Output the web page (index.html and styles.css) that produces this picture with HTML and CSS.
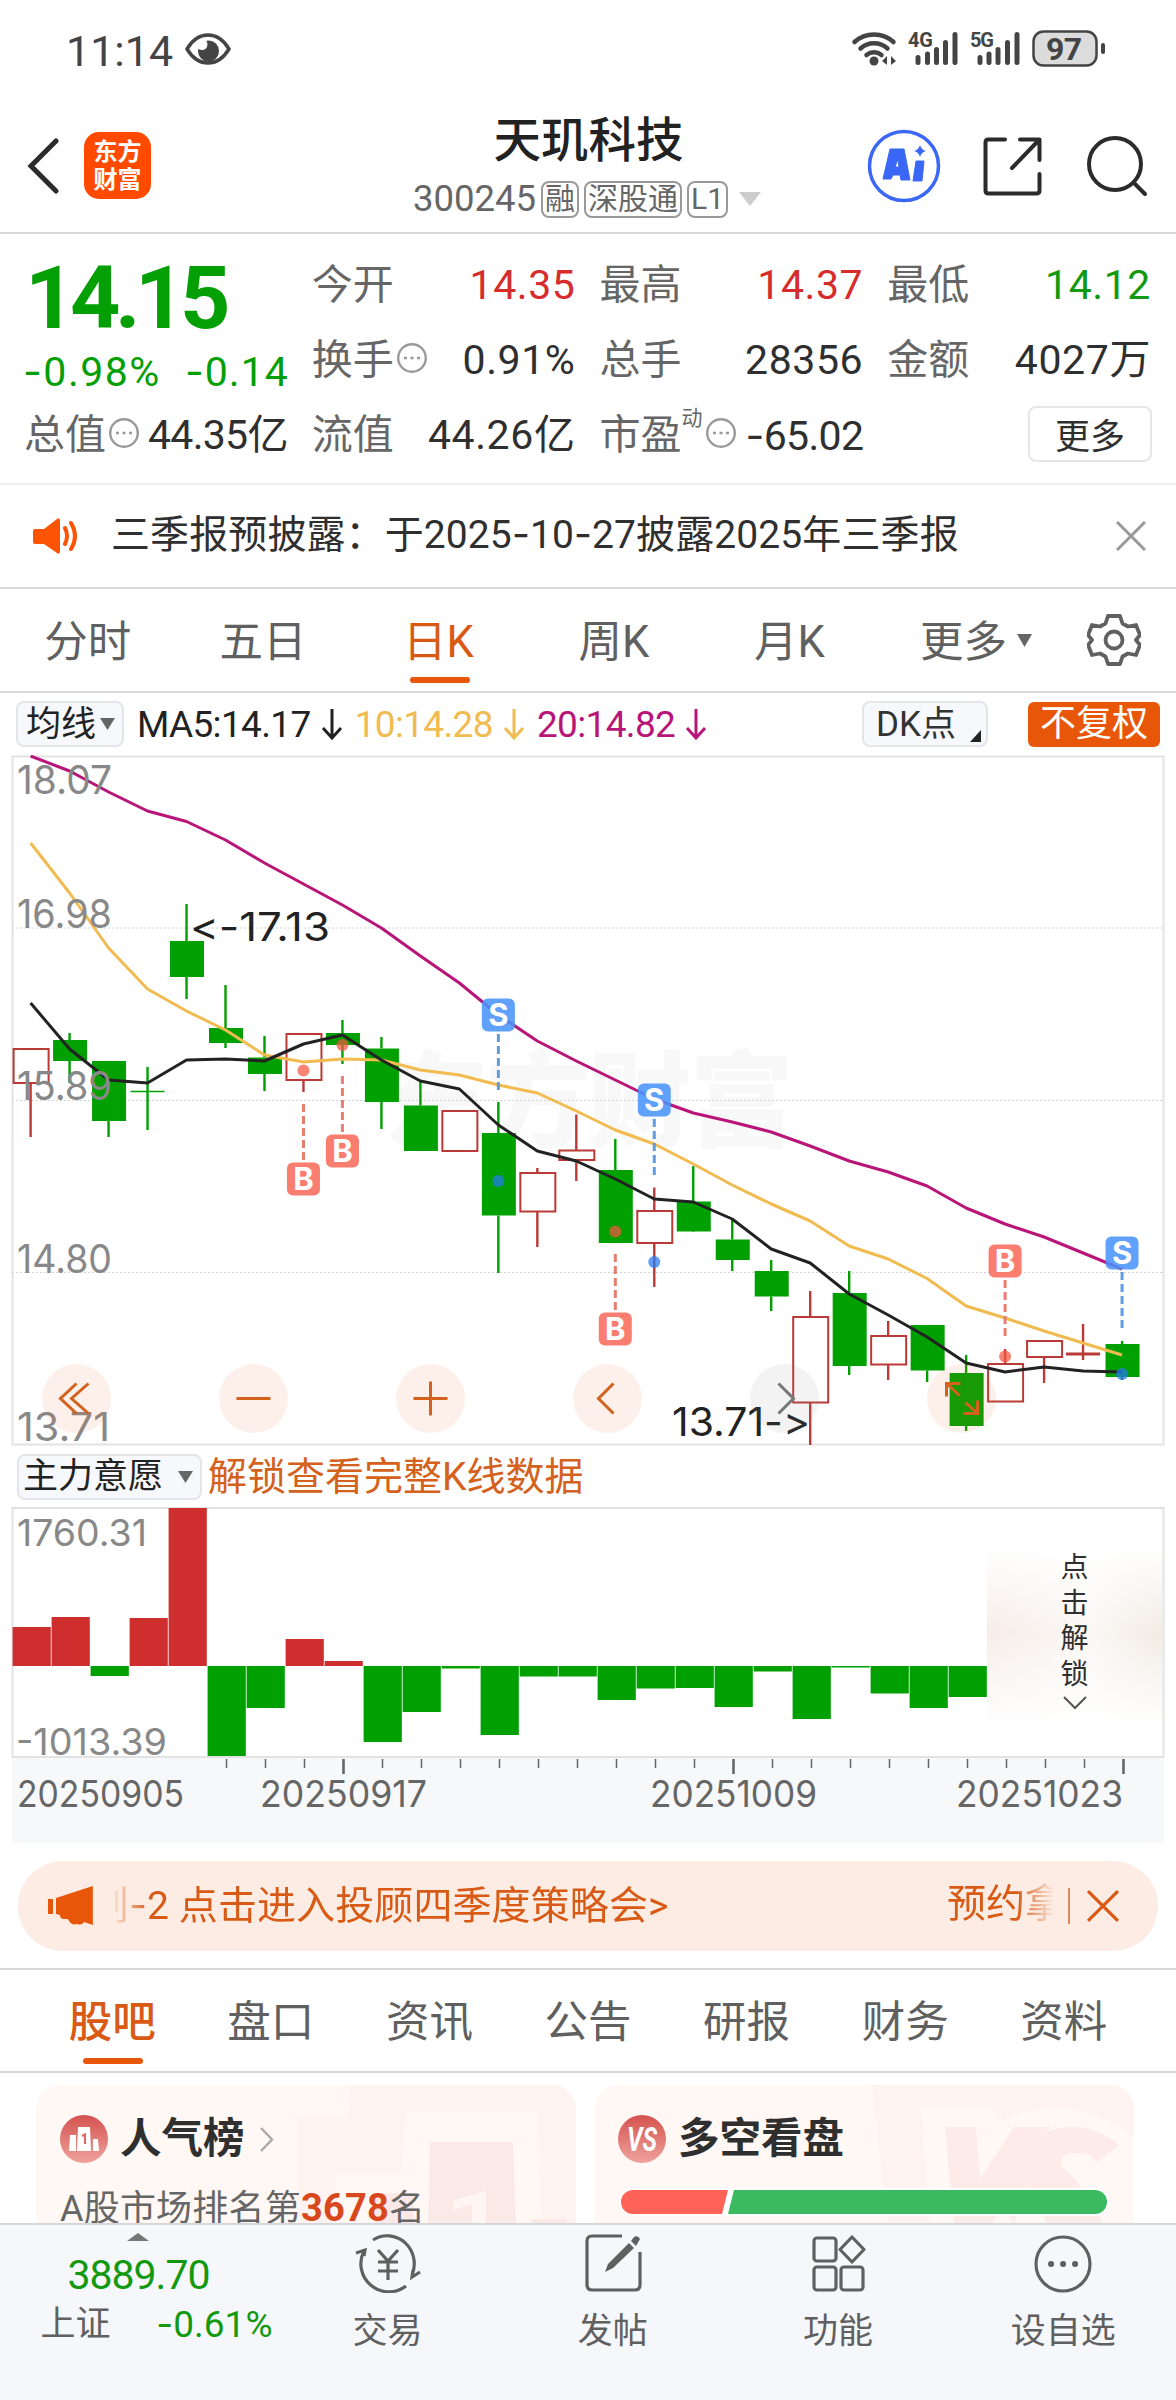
FILE: index.html
```html
<!DOCTYPE html>
<html lang="zh-CN">
<head>
    <meta charset="utf-8">
    <title>天玑科技 300245</title>
    <link rel="stylesheet" href="styles.css">
</head>
<body>
    <div class="status">
        <span class="clock">11:14</span>
        <svg class="eye" width="46" height="32" viewBox="0 0 46 32">
            <circle cx="23.500" cy="18" r="10.500" fill="#444"/>
            <circle cx="17" cy="11.500" r="5.500" fill="#fff"/>
            <path d="M2 16C8 6 15 2 23 2s15 4 21 14c-6 10-13 14-21 14S8 26 2 16z" fill="none" stroke="#444" stroke-width="3.500"/>
        </svg>
        <svg class="signals" width="256" height="40" viewBox="850 30 256 40">
            <g fill="none" stroke="#444" stroke-width="4.500" stroke-linecap="round">
                <path d="M854.500 43a29 29 0 0 1 39 0"/>
                <path d="M860.500 49.500a20 20 0 0 1 27 0"/>
                <path d="M866.500 56a12 12 0 0 1 15 0"/>
            </g>
            <circle cx="874" cy="62" r="4.500" fill="#444"/>
            <path d="M882 62l5-5v9zM896 62l-5-5v9z" fill="#444"/>
            <g stroke="#444" stroke-width="5" stroke-linecap="round">
                <path d="M918 58.500v5M927.500 55v8.500M936.500 50.500v13M945.500 43.500v20M955 35.500v28"/>
                <path d="M980 58.500v5M989 55v8.500M998 50.500v13M1007.500 43.500v20M1017 35.500v28"/>
            </g>
            <text x="908" y="48" class="net" textLength="25">4G</text>
            <text x="970" y="48" class="net" textLength="24">5G</text>
            <rect x="1033.500" y="32.500" width="63" height="34" rx="10" fill="#dcdcdc" stroke="#444" stroke-width="2.500"/>
            <rect x="1101" y="44" width="4" height="11" rx="2" fill="#444"/>
            <text x="1046" y="61" class="battery" textLength="36">97</text>
        </svg>
    </div>

    <div class="header">
        <svg class="back" width="32" height="56" viewBox="0 0 32 56"><path d="M29 3L4 28l25 25" fill="none" stroke="#2b2b2b" stroke-width="5" stroke-linecap="round"/></svg>
        <div class="logo">东方<br>财富</div>
        <div class="title">
            <h1>天玑科技</h1>
            <div class="code">
                <span class="num">300245</span>
                <i>融</i><i>深股通</i><i>L1</i>
                <svg width="22" height="14" viewBox="0 0 22 14"><path d="M0 0h22L11 14z" fill="#ccc"/></svg>
            </div>
        </div>
        <svg class="ai" width="74" height="74" viewBox="0 0 74 74">
            <circle cx="37" cy="37" r="34.500" fill="none" stroke="#3a67f5" stroke-width="3.500"/>
            <path d="M23 20h14l6 31h-9l-1-5h-7l-2 4h-8zM28 38h4l-1-8z" fill="#3a67f5" fill-rule="evenodd" stroke="#3a67f5" stroke-linejoin="round"/>
            <path d="M49 32h8l-2 20h-9z" fill="#3a67f5" stroke="#3a67f5" stroke-linejoin="round"/>
            <path d="M53 16q1.500 5 6 6-4.500 1-6 6-1.500-5-6-6 4.500-1 6-6z" fill="#3a67f5"/>
        </svg>
        <svg class="share" width="60" height="60" viewBox="0 0 60 60">
            <path d="M23 3.500H6.500q-3 0-3 3v48q0 3 3 3h48q3 0 3-3V38M38 3.500h19.500V24M56 5L30 32" fill="none" stroke="#2b2b2b" stroke-width="4" stroke-linecap="round" stroke-linejoin="round"/>
        </svg>
        <svg class="search" width="62" height="62" viewBox="0 0 62 62">
            <circle cx="29" cy="29" r="26" fill="none" stroke="#2b2b2b" stroke-width="4"/>
            <path d="M48 48l11 11" stroke="#2b2b2b" stroke-width="4" stroke-linecap="round"/>
        </svg>
    </div>

    <div class="quote">
        <div class="price">
            <b>14.15</b>
            <p><span><u>-</u>0.98%</span><span><u>-</u>0.14</span></p>
        </div>
        <div class="cell"><label>今开</label><span class="up">14.35</span></div>
        <div class="cell"><label>最高</label><span class="up">14.37</span></div>
        <div class="cell"><label>最低</label><span class="down">14.12</span></div>
        <div class="cell"><label>换手</label><svg class="info" viewBox="0 0 32 32"><circle cx="16" cy="16" r="13.800"/><path d="M8 16h3M14.500 16h3M21 16h3"/></svg><span>0.91%</span></div>
        <div class="cell"><label>总手</label><span>28356</span></div>
        <div class="cell"><label>金额</label><span>4027万</span></div>
        <div class="cell tight"><label>总值</label><svg class="info" viewBox="0 0 32 32"><circle cx="16" cy="16" r="13.800"/><path d="M8 16h3M14.500 16h3M21 16h3"/></svg><span>44.35亿</span></div>
        <div class="cell"><label>流值</label><span>44.26亿</span></div>
        <div class="cell tight"><label>市盈<sup>动</sup></label><svg class="info" viewBox="0 0 32 32"><circle cx="16" cy="16" r="13.800"/><path d="M8 16h3M14.500 16h3M21 16h3"/></svg><span><u>-</u>65.02</span></div>
        <div class="cell"><button class="more">更多</button></div>
    </div>

    <div class="notice">
        <svg width="46" height="38" viewBox="0 0 46 38">
            <path d="M2 12h9L24 2q3-2 3 2v30q0 4-3 2L11 27H2q-2 0-2-2V14q0-2 2-2z" fill="#fc5305"/>
            <path d="M32 11q4 8 0 16M38 6q8 13 0 26" fill="none" stroke="#fc5305" stroke-width="4" stroke-linecap="round"/>
        </svg>
        <p>三季报预披露：于2025<u>-</u>10<u>-</u>27披露2025年三季报</p>
        <svg class="close" width="30" height="30" viewBox="0 0 30 30"><path d="M1 1l28 28M29 1L1 29" stroke="#999" stroke-width="3"/></svg>
    </div>

    <div class="tabs period">
        <a>分时</a><a>五日</a><a class="active">日K</a><a>周K</a><a>月K</a>
        <a class="wide">更多<svg width="15" height="13" viewBox="0 0 15 13"><path d="M0 0h15L7.500 13z" fill="#666"/></svg></a>
        <svg class="gear" width="54" height="54" viewBox="0 0 54 54">
            <path d="M21 3h12l2.500 7.500 5.500 3 8-1.500 4 10-4 5 4 5-4 10-8-1.500-5.500 3L33 51H21l-2.500-7.500-5.500-3L5 42 1 32l4-5-4-5 4-10 8 1.500 5.500-3z" fill="none" stroke="#606060" stroke-width="3.800" stroke-linejoin="round"/>
            <circle cx="27" cy="27" r="8.500" fill="none" stroke="#606060" stroke-width="3.800"/>
        </svg>
    </div>

    <div class="ma">
        <span class="pick">均线<svg width="15" height="12" viewBox="0 0 15 12"><path d="M0 0h15L7.500 12z" fill="#666"/></svg></span>
        <span class="ma5">MA5:14.17<svg viewBox="0 0 22 32"><path d="M11 1v28M2 20l9 10 9-10"/></svg></span>
        <span class="ma10">10:14.28<svg viewBox="0 0 22 32"><path d="M11 1v28M2 20l9 10 9-10"/></svg></span>
        <span class="ma20">20:14.82<svg viewBox="0 0 22 32"><path d="M11 1v28M2 20l9 10 9-10"/></svg></span>
        <span class="pick dk">DK点<svg width="11" height="12" viewBox="0 0 11 12"><path d="M11 0v12H0z" fill="#222"/></svg></span>
        <span class="adjust">不复权</span>
    </div>

    <svg class="kline" id="kline" width="1176" height="691" viewBox="0 0 1176 691"></svg>

    <div class="indicator">
        <span class="pick">主力意愿<svg width="15" height="12" viewBox="0 0 15 12"><path d="M0 0h15L7.500 12z" fill="#666"/></svg></span>
        <span class="unlock">解锁查看完整K线数据</span>
    </div>

    <div class="flow">
        <svg id="flow" width="1176" height="337" viewBox="0 0 1176 337"></svg>
        <div class="locked">
            <span>点</span><span>击</span><span>解</span><span>锁</span>
            <svg width="24" height="14" viewBox="0 0 24 14"><path d="M1 1l11 11L23 1" fill="none" stroke="#555" stroke-width="2"/></svg>
        </div>
    </div>

    <div class="banner">
        <svg width="46" height="40" viewBox="0 0 46 40">
            <path d="M0 13h5v15H0zM8 12L45 0v39l-9-3q-2 4-7 2-6 2-9-5h-4q-4 0-4-4l-4-1z" fill="#e8560a"/>
        </svg>
        <div class="scroll"><span>划<u>-</u>2 点击进入投顾四季度策略会&gt;</span><span>预约拿</span></div>
        <hr>
        <svg width="34" height="34" viewBox="0 0 34 34"><path d="M2 2l30 30M32 2L2 32" stroke="#d95a14" stroke-width="3.200"/></svg>
    </div>

    <div class="tabs sections">
        <a class="active">股吧</a><a>盘口</a><a>资讯</a><a>公告</a><a>研报</a><a>财务</a><a>资料</a>
    </div>

    <div class="cards">
        <div class="card">
            <svg class="art" width="540" height="139" viewBox="0 0 540 139">
                <path d="M314 0h226v139H262V33h50z" fill="#fef3f0"/>
                <path d="M370 26h132l3 113H300V88h65z" fill="#fff8f5"/>
                <path d="M394 57h83l3 82h-88zM338 108h40l-1 31h-39zM496 134h34v5h-34z" fill="#fbe9e7"/>
                <path d="M450 106v33h-14v-20l-19 6 1-10z" fill="#fff6f4"/>
            </svg>
            <h2>
                <svg width="48" height="48" viewBox="0 0 48 48">
                    <circle cx="24" cy="24" r="24" fill="url(#badge)"/>
                    <path d="M10 20h6v16H9zM18 12h12l1 24H17zM33 24h5l1 12h-6z" fill="#fff"/>
                    <path d="M22 21l3-1.500V29" fill="none" stroke="#dd6a65" stroke-width="2.200"/>
                </svg>人气榜
                <svg width="15" height="25" viewBox="0 0 15 25"><path d="M2 1l11 11.500L2 24" fill="none" stroke="#aaa" stroke-width="2.500"/></svg>
            </h2>
            <p>A股市场排名第<b>3678</b>名</p>
        </div>
        <div class="card">
            <svg class="art" width="540" height="139" viewBox="0 0 540 139">
                <path d="M278 0h262v139H294z" fill="#fef3f0"/>
                <path d="M327 22h70l12 14q45-24 92-6 24 8 39 22v87H336z" fill="#fff8f5"/>
                <path d="M351 42h31l4 52 34-52h36l-58 97h-38z" fill="#fcebe9"/>
                <path d="M525 60q-20-18-50-18-36 2-52 35-12 20-28 26l25 36 12-38 22 38h55q-18-38-40-56-6-16 14-15 14 0 20 9z" fill="#fcebe9"/>
            </svg>
            <h2>
                <svg width="48" height="48" viewBox="0 0 48 48">
                    <defs><linearGradient id="badge" x2="0" y2="1"><stop offset="0" stop-color="#d4524f"/><stop offset="1" stop-color="#efa29d"/></linearGradient></defs>
                    <circle cx="24" cy="24" r="24" fill="url(#badge)"/>
                    <text x="9" y="36" class="vs" textLength="30" lengthAdjust="spacingAndGlyphs">VS</text>
                </svg>多空看盘
            </h2>
            <svg class="ratio" width="490" height="28" viewBox="-2 -2 490 28">
                <rect x="-2" y="-2" width="490" height="28" rx="14" fill="#fff"/>
                <path d="M12 0h95l-6 24H12A12 12 0 0 1 12 0z" fill="#ff6257"/>
                <path d="M113 0h361a12 12 0 0 1 0 24H107z" fill="#3cba5f"/>
            </svg>
        </div>
    </div>

    <div class="nav">
        <div class="index">
            <svg width="22" height="8" viewBox="0 0 22 8"><path d="M0 8L11 0l11 8z" fill="#777"/></svg>
            <strong>3889.70</strong>
            <p><span>上证</span><em><u>-</u>0.61%</em></p>
        </div>
        <a>
            <svg width="66" height="60" viewBox="0 0 66 60">
                <path d="M18 7A27 28 0 0 1 57 42M51 53A28 28 0 0 1 9 18M1 20l9-3-1 6M65 39l-8 5 1-7M23 17l10 11 10-11M33 28v19M23 29h20M23 38h20"/>
            </svg>交易
        </a>
        <a>
            <svg width="66" height="60" viewBox="0 0 66 60">
                <path d="M42 3H12Q7 3 7 8v44q0 5 5 5h43q5 0 5-5V19"/>
                <path d="M25 39l3-8 21-21 5 5-21 20zM51 8l3-4q4-2 6 2l-4 7z" fill="#606060" stroke="none"/>
            </svg>发帖
        </a>
        <a>
            <svg width="66" height="60" viewBox="0 0 66 60">
                <rect x="9" y="5" width="22" height="23" rx="3"/><rect x="9" y="34" width="22" height="23" rx="3"/><rect x="36" y="34" width="22" height="23" rx="3"/>
                <path d="M47 4l12 12.500L47 29 35 16.500z" stroke-linejoin="round"/>
            </svg>功能
        </a>
        <a>
            <svg width="66" height="60" viewBox="0 0 66 60">
                <circle cx="33" cy="31" r="27"/>
                <path d="M21 31h.1M33 31h.1M45 31h.1" stroke-width="6" stroke-linecap="round"/>
            </svg>设自选
        </a>
    </div>

    <script src="script.js"></script>
</body>
</html>
```
FILE: styles.css
```css
* {
    box-sizing: border-box;
}
body {
    margin: 0;
    width: 1176px;
    height: 2400px;
    overflow: hidden;
    display: flex;
    flex-direction: column;
    background-color: #fff;
    color: #2f2f2f;
    font-family: Roboto, "Noto Sans CJK SC", sans-serif;
    font-size: 41px;
    line-height: 1;
}
body > * {
    flex-shrink: 0;
}
h1, h2, p {
    margin: 0;
    font-weight: normal;
}
i, em {
    font-style: normal;
}
/* wider dash than the one in Roboto */
u {
    font-family: Inter, sans-serif;
    text-decoration: none;
}
.up {
    color: #d62c2c;
}
.down {
    color: #12990f;
}

/* status bar */
.status {
    height: 98px;
    padding: 0 70px 0 66px;
    display: flex;
    align-items: center;
}
.clock {
    font-size: 43px;
    color: #444;
    margin-right: 12px;
    padding-top: 4px;
}
.signals {
    margin-left: auto;
}
.net {
    font: bold 20px Roboto, sans-serif;
    fill: #444;
}
.battery {
    font: bold 32px Roboto, sans-serif;
    fill: #444;
}

/* title bar */
.header {
    height: 136px;
    padding: 1px 28px 0 27px;
    display: flex;
    align-items: center;
    border-bottom: 2px solid #dadada;
}
.logo {
    width: 67px;
    height: 67px;
    margin-left: 25px;
    padding-top: 6px;
    border-radius: 15px;
    background-color: #ff4a00;
    color: #fff;
    font-size: 24px;
    font-weight: bold;
    line-height: 28px;
    text-align: center;
}
.title {
    flex: 1;
    margin: 5px 0 0 158px;
    display: flex;
    flex-direction: column;
    align-items: center;
    gap: 15px;
}
.title h1 {
    font-size: 47.5px;
    font-weight: 500;
    color: #222;
    margin-right: -1px;
}
.code {
    display: flex;
    align-items: center;
    gap: 5px;
    font-size: 36.5px;
    color: #666;
    margin-right: 2px;
}
.code i {
    height: 37px;
    padding: 0 2px;
    border: 2px solid #999;
    border-radius: 8px;
    font-size: 30px;
    line-height: 31px;
}
.code svg {
    margin-left: 6px;
}
.share {
    margin-left: 41px;
}
.search {
    margin-left: 44px;
}

/* quote */
.quote {
    height: 251px;
    padding: 14px 25px 0;
    display: grid;
    grid-template-columns: repeat(4, 1fr);
    grid-template-rows: repeat(3, 75px);
    column-gap: 25px;
    border-bottom: 2px solid #eee;
}
.price {
    grid-row: span 2;
    color: #049f04;
}
.price b {
    display: block;
    font-size: 88px;
    margin-top: 6px;
    letter-spacing: -5.5px;
}
.price p {
    display: flex;
    justify-content: space-between;
    margin: 9px -1px 0 -2px;
    letter-spacing: 1px;
}
.price p span:first-child {
    letter-spacing: 1.5px;
}
.cell {
    display: flex;
    align-items: center;
    white-space: nowrap;
}
.cell label {
    color: #666;
    margin-left: -1px;
}
.cell span {
    margin-left: auto;
    letter-spacing: 0.6px;
}
.tight span {
    letter-spacing: -0.7px;
}
.cell sup {
    font-size: 21px;
    line-height: 0;
    vertical-align: 24px;
}
.info {
    width: 32px;
    height: 32px;
    margin: -5px 0 0 2px;
    fill: none;
    stroke: #999;
    stroke-width: 2.4;
}
.more {
    margin: -4px -1px 0 auto;
    width: 124px;
    height: 56px;
    padding: 0 0 6px;
    border: 2px solid #e6e6e6;
    border-radius: 8px;
    background-color: #fff;
    color: #2f2f2f;
    font: 35px Roboto, "Noto Sans CJK SC", sans-serif;
}

.notice {
    height: 104px;
    padding: 0 30px 0 33px;
    display: flex;
    align-items: center;
    font-size: 39px;
    border-bottom: 2px solid #d8d8d8;
}
.notice p {
    margin: -3px 0 0 32px;
    letter-spacing: 0.1px;
    white-space: nowrap;
}
.close {
    margin-left: auto;
}

/* tab rows */
.tabs {
    display: flex;
    align-items: center;
    height: 104px;
    border-bottom: 2px solid #d8d8d8;
    font-size: 43.5px;
    color: #606060;
}
.tabs a {
    position: relative;
    flex: 1;
    padding-top: 5px;
    text-align: center;
}
.tabs .active {
    color: #d95a14;
}
.tabs .active::after {
    content: "";
    position: absolute;
    left: calc(50% - 29px);
    bottom: -19px;
    width: 60px;
    height: 6px;
    border-radius: 3px;
    background-color: #e8560a;
}
.period {
    padding: 0 35px 0 0;
}
.period .wide {
    flex: 0 0 210px;
    left: -6px;
}
.wide svg {
    margin: 0 0 10px 10px;
}
.sections {
    height: 105px;
    padding: 0 33px;
    border-top: 2px solid #d8d8d8;
}
.sections .active {
    font-weight: 500;
}

/* moving averages */
.ma {
    height: 62px;
    padding: 0 16px;
    display: flex;
    align-items: center;
    font-size: 37px;
    white-space: nowrap;
}
.pick {
    height: 46px;
    display: flex;
    align-items: center;
    padding: 0 7px 0 8px;
    border: 2px solid #e4e5ea;
    border-radius: 8px;
    background-color: #f7f8fc;
    color: #222;
    font-size: 35px;
}
.pick svg {
    margin-left: 4px;
}
.ma5, .ma10, .ma20 {
    display: flex;
    align-items: center;
    margin-left: 13px;
    letter-spacing: -0.65px;
}
.ma5 svg, .ma10 svg, .ma20 svg {
    width: 22px;
    height: 32px;
    margin-left: 10px;
    fill: none;
    stroke: currentColor;
    stroke-width: 3;
}
.ma5 {
    color: #222;
}
.ma10 {
    margin-left: 12px;
    color: #f0bb50;
}
.ma20 {
    margin-left: 12px;
    color: #b91579;
}
.dk {
    margin-left: auto;
    padding-left: 12px;
    padding-right: 5px;
    color: #333;
}
.dk svg {
    margin: 23px 0 0 14px;
}
.adjust {
    margin-left: 40px;
    width: 132px;
    height: 45px;
    border-radius: 6px;
    background-color: #e8560a;
    color: #fff;
    font-size: 36px;
    line-height: 44px;
    text-align: center;
}

/* charts */
.kline {
    display: block;
    height: 691px;
}
.scale {
    font: 39px Inter, sans-serif;
    fill: #888;
}
.small {
    font-size: 37px;
}
.date {
    font: 37px Inter, sans-serif;
    fill: #666;
}
.peak {
    font: 39px Inter, sans-serif;
    font-feature-settings: "calt" 0;
    fill: #222;
}
.watermark {
    font: 900 104px "Noto Sans CJK SC", sans-serif;
    fill: #f8f8f8;
}
.flag {
    font: bold 31px Inter, "Liberation Sans", sans-serif;
    fill: #fff;
    text-anchor: middle;
}
.indicator {
    height: 61px;
    padding: 0 17px;
    display: flex;
    align-items: center;
}
.indicator .pick {
    padding-left: 4px;
}
.indicator .pick svg {
    margin-left: 15px;
}
.unlock {
    margin: 2px 0 0 6px;
    font-size: 39px;
    color: #d4611c;
}
.flow {
    position: relative;
    height: 337px;
}
.locked {
    position: absolute;
    left: 987px;
    top: 3px;
    width: 175px;
    height: 246px;
    padding-top: 40px;
    display: flex;
    flex-direction: column;
    align-items: center;
    background: linear-gradient(#fff 15%, transparent 50%, #fff 88%), linear-gradient(90deg, #f6ede9, #fbf8f5 60%, #f2ebe4);
    color: #2f2f2f;
    font-size: 28px;
}
.locked span {
    height: 35.5px;
    line-height: 35px;
}
.locked svg {
    margin-top: 4px;
}

.banner {
    height: 90px;
    margin: 17px 18px;
    padding: 0 38px 0 30px;
    display: flex;
    align-items: center;
    border-radius: 45px;
    background-color: #fcece3;
    color: #d95a14;
    font-size: 39px;
}
.scroll {
    width: 946px;
    margin-left: 17px;
    padding: 6px 0 8px;
    display: flex;
    justify-content: space-between;
    overflow: hidden;
    white-space: nowrap;
    -webkit-mask-image: linear-gradient(90deg, transparent, #000 40px, #000 906px, transparent);
    mask-image: linear-gradient(90deg, transparent, #000 40px, #000 906px, transparent);
}
.scroll span:first-child {
    margin-left: -21px;
    letter-spacing: 0.1px;
}
.scroll span:last-child {
    margin-right: -10px;
}
.banner hr {
    width: 2px;
    height: 36px;
    margin: 0 16px 0 14px;
    border: 0;
    background-color: #dc8a5c;
}

/* cards are cut off by the bottom bar */
.cards {
    height: 150px;
    padding: 12px 42px 0 36px;
    display: grid;
    grid-template-columns: 1fr 1fr;
    gap: 18px;
    overflow: hidden;
}
.card {
    position: relative;
    height: 300px;
    padding: 30px 24px;
    border-radius: 24px;
    overflow: hidden;
    background-color: #fff8f5;
}
.art {
    position: absolute;
    left: 0;
    top: 0;
}
.card h2 {
    position: relative;
    display: flex;
    align-items: center;
    height: 48px;
    font-size: 41.5px;
    font-weight: bold;
    color: #2f2f2f;
}
.card h2 svg:first-child {
    margin-right: 12px;
}
.card h2 svg:last-child:not(:first-child) {
    margin-left: 14px;
}
.card p {
    position: relative;
    margin-top: 26px;
    font-size: 36px;
    letter-spacing: 0.2px;
    color: #666;
}
.card p b {
    color: #d9481c;
    font-size: 38px;
}
.vs {
    font: italic bold 33px Roboto, sans-serif;
    fill: #fff;
}
.ratio {
    position: relative;
    display: block;
    margin: 25px 0 0 1px;
}

.nav {
    height: 178px;
    display: flex;
    border-top: 2px solid #d4d6da;
    background-color: #f6f7fa;
    color: #606060;
    font-size: 35px;
}
.nav a {
    flex: 1;
    display: flex;
    flex-direction: column;
    align-items: center;
    padding-top: 8px;
    gap: 21px;
}
.nav a svg {
    fill: none;
    stroke: #606060;
    stroke-width: 3.2;
}
.index {
    width: 275px;
    padding-top: 8px;
    display: flex;
    flex-direction: column;
    align-items: center;
}
.index strong {
    margin: 14px 0 0 2px;
    font-size: 41px;
    font-weight: normal;
    letter-spacing: -1px;
    color: #12990f;
}
.index p {
    width: 232px;
    margin: 11px 0 0 38px;
    display: flex;
    justify-content: space-between;
}
.index em {
    color: #12990f;
    font-size: 37px;
    margin-top: -2px;
}
```
FILE: script.js
```javascript
var GREEN = '#00a000';
var RED = '#b93a36';
var STEP = 38.98;

// kind, high, body top, body bottom, low
var candles = [
    ['r', 294, 294, 328, 382], ['g', 278, 285, 306, 328], ['g', 306, 306, 366, 382],
    ['g', 312, 336, 337, 375], ['g', 149, 186, 222, 244], ['g', 230, 273, 288, 293],
    ['g', 281, 302.5, 319, 336], ['r', 278, 279, 325, 337], ['g', 265, 278, 290, 309],
    ['g', 282, 293.5, 347, 374], ['g', 326, 350.5, 396, 396], ['r', 355, 356, 396, 396],
    ['g', 347, 378, 460.5, 518], ['r', 413, 418, 456.5, 492], ['r', 359.5, 395.5, 405, 426],
    ['g', 384, 415, 488, 488], ['r', 432.5, 456, 488, 532], ['g', 411, 446.5, 476.5, 477],
    ['g', 465, 484.5, 505, 516], ['g', 505, 516, 541.5, 556], ['r', 536, 562, 647.5, 690],
    ['g', 516, 538, 611, 620], ['r', 566, 581, 609.5, 625], ['g', 570, 570, 615.5, 627],
    ['g', 600, 618, 671, 676], ['r', 594, 609, 646.5, 647], ['r', 585, 586, 602, 628],
    ['r', 569, 598.5, 599.5, 605], ['g', 586, 589, 622, 625]
];
var ma5 = [248, 294, 325, 328, 305, 304, 306, 289, 280, 305, 326, 334, 370, 396, 406, 424, 444, 447, 464, 494, 508, 539, 560, 582, 608, 617, 612, 616, 617];
var ma10 = [88, 138, 193, 234, 256, 275, 300, 307, 304, 305, 315, 320, 330, 338, 356, 375, 389, 409, 430, 449, 466, 491, 504, 523.5, 551, 563, 576, 588, 600];
var ma20 = [1, 16, 37, 56, 66.5, 85, 108, 129, 150, 173, 201, 228, 260, 286, 306, 325, 344, 358, 367, 377, 391, 406, 417, 431, 453, 469, 482, 498, 514];

// letter, candle index, flag y, dash start, dash end, dot y
var flags = [
    ['B', 7, 424, 349, 406, 315.5], ['B', 8, 396, 321, 377, 290], ['S', 12, 260, 279, 335, 426],
    ['B', 15, 574, 499, 555, 476.5], ['S', 16, 345, 364, 420, 507], ['B', 25, 506, 525, 581, 601.5],
    ['S', 28, 498, 517, 573, 619]
];

// main force, positive bars are red
var flow = [39, 49, -10, 48, 158, -90, -42, 27, 5, -76, -46, -2.5, -69, -10.5, -10.5, -34, -22.5, -22, -41, -5.5, -53, -1.5, -27.5, -42, -31];

function xOf(i) {
    return 30.6 + STEP * i;
}

function line(x1, y1, x2, y2, color, width, extra) {
    return '<line x1="' + x1 + '" y1="' + y1 + '" x2="' + x2 + '" y2="' + y2 + '" stroke="' + color + '" stroke-width="' + width + '" ' + (extra || '') + '/>';
}

function rect(x, y, w, h, attrs) {
    return '<rect x="' + x + '" y="' + y + '" width="' + w + '" height="' + h + '" ' + attrs + '/>';
}

function label(x, y, text, cls, length) {
    return '<text x="' + x + '" y="' + y + '" class="' + cls + '" textLength="' + length + '" lengthAdjust="spacingAndGlyphs">' + text + '</text>';
}

function average(values, color) {
    var points = values.map(function(y, i) {
        return xOf(i).toFixed(1) + ',' + y;
    });
    return '<polyline points="' + points.join(' ') + '" fill="none" stroke="' + color + '" stroke-width="3" stroke-linejoin="round"/>';
}

function drawKline() {
    var out = '<text x="384" y="384" class="watermark" textLength="410">东方财富</text>';
    out += rect(12.5, 1.5, 1151, 688, 'fill="none" stroke="#e2e2e2" stroke-width="2"');
    [173, 345.5, 517.5].forEach(function(y) {
        out += line(12, y, 1164, y, '#d4d4d4', 1, 'stroke-dasharray="2 2"');
    });

    candles.forEach(function(c, i) {
        var x = xOf(i);
        var color = c[0] === 'g' ? GREEN : RED;
        out += line(x, c[1], x, c[2], color, 2.4);
        out += line(x, c[3], x, c[4], color, 2.4);
        if (c[3] - c[2] <= 1) {
            out += line(x - 17, c[2] + 0.5, x + 17, c[2] + 0.5, color, c[0] === 'g' ? 1.5 : 3);
        } else if (c[0] === 'g') {
            out += rect(x - 16.5, c[2], 34, c[3] - c[2], 'fill="' + GREEN + '"');
        } else {
            out += rect(x - 17, c[2], 35, c[3] - c[2], 'fill="#fff" stroke="' + RED + '" stroke-width="2"');
        }
    });

    out += average(ma20, '#b91579');
    out += average(ma10, '#f2bb50');
    out += average(ma5, '#222');

    out += label(17, 39, '18.07', 'scale', 95);
    out += label(17, 173, '16.98', 'scale', 95);
    out += label(17, 345, '15.89', 'scale', 95);
    out += label(17, 517.5, '14.80', 'scale', 95);
    out += label(17, 686, '13.71', 'scale', 93);
    out += label(190, 186, '&lt;-17.13', 'peak', 140);
    out += label(672, 681, '13.71-&gt;', 'peak', 138);

    flags.forEach(function(f) {
        var x = xOf(f[1]);
        var buy = f[0] === 'B';
        out += '<circle cx="' + x + '" cy="' + f[5] + '" r="6" fill="' + (buy ? '#f5543f' : '#2478f5') + '" opacity="0.72"/>';
        out += line(x, f[3], x, f[4], buy ? '#e87d70' : '#5f9ce0', 3, 'stroke-dasharray="8 4"');
        out += rect(x - 16.5, f[2] - 16.5, 33, 33, 'rx="6" fill="' + (buy ? '#fa7a6b' : '#4a94fb') + '" opacity="' + (buy ? 0.97 : 0.88) + '"');
        out += '<text x="' + x + '" y="' + (f[2] + 11) + '" class="flag">' + f[0] + '</text>';
    });

    // round control buttons
    var icons = [
        'M12 -15L-5 0L12 15M0 -15L-16 0L0 15',
        'M-17 0H17',
        'M-17 0H17M0 -17V17',
        'M6 -15L-9 0L6 15',
        'M-6 -15L9 0L-6 15',
        'M-2 -3L-15 -15M-15 -2V-15H-1M4 4L16 15M16 2V15H2'
    ];
    icons.forEach(function(d, i) {
        var x = 76.5 + 177 * i;
        var off = i === 4;
        out += '<g transform="translate(' + x + ' 643.5)">';
        out += '<circle r="34.5" fill="' + (off ? '#888' : '#ee7035') + '" opacity="0.1"/>';
        out += '<path d="' + d + '" fill="none" stroke="' + (off ? '#777' : '#d4611c') + '" stroke-width="3"/></g>';
    });
    document.getElementById('kline').innerHTML = out;
}

function drawFlow() {
    var zero = 159;
    var out = rect(12, 251, 1152, 85, 'fill="#f7f8fa"');
    out += rect(12.5, 1, 1151, 249, 'fill="#fff" stroke="#e2e2e2" stroke-width="2"');
    flow.forEach(function(v, i) {
        var top = v > 0 ? zero - v : zero;
        out += rect((12.6 + 39 * i).toFixed(1), top, 38.2, Math.abs(v), 'fill="' + (v > 0 ? '#cf2e2e' : GREEN) + '"');
    });
    for (var i = 5; i < 29; i++) {
        var major = i === 8 || i === 18 || i === 28;
        out += line(31.5 + 39 * i, 252, 31.5 + 39 * i, major ? 267 : 261, '#666', major ? 2.6 : 1.5);
    }
    out += label(17, 39, '1760.31', 'scale small', 130);
    out += label(16, 248, '-1013.39', 'scale small', 151);
    out += label(17, 300, '20250905', 'date', 167);
    out += label(260, 300, '20250917', 'date', 167);
    out += label(650, 300, '20251009', 'date', 167);
    out += label(956, 300, '20251023', 'date', 167);
    document.getElementById('flow').innerHTML = out;
}

drawKline();
drawFlow();
```
